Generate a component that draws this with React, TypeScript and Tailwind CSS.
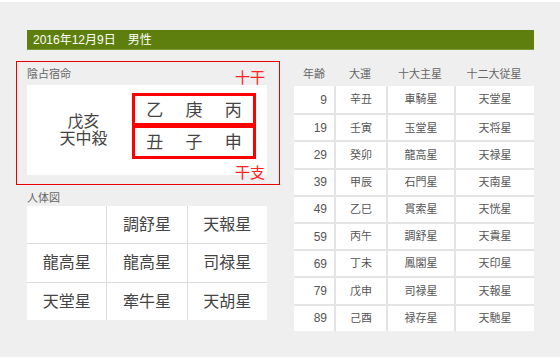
import React from "react";

const font = { fontFamily: '"Liberation Sans", "Noto Sans CJK JP", sans-serif' };

const stems = ["乙", "庚", "丙"];
const branches = ["丑", "子", "申"];

const body: string[][] = [
  ["", "調舒星", "天報星"],
  ["龍高星", "龍高星", "司禄星"],
  ["天堂星", "牽牛星", "天胡星"],
];

interface Luck {
  age: number;
  luck: string;
  main: string;
  sub: string;
}

const lucks: Luck[] = [
  { age: 9, luck: "辛丑", main: "車騎星", sub: "天堂星" },
  { age: 19, luck: "壬寅", main: "玉堂星", sub: "天将星" },
  { age: 29, luck: "癸卯", main: "龍高星", sub: "天禄星" },
  { age: 39, luck: "甲辰", main: "石門星", sub: "天南星" },
  { age: 49, luck: "乙巳", main: "貫索星", sub: "天恍星" },
  { age: 59, luck: "丙午", main: "調舒星", sub: "天貴星" },
  { age: 69, luck: "丁未", main: "鳳閣星", sub: "天印星" },
  { age: 79, luck: "戊申", main: "司禄星", sub: "天報星" },
  { age: 89, luck: "己酉", main: "禄存星", sub: "天馳星" },
];

const App: React.FC = () => {
  return (
    <div className="w-[560px] h-[359px] bg-white pt-[2px]" style={font}>
      <div className="h-[355px] bg-[#efefef] pl-[27px] pr-[26px] pt-[28px]">
        <div className="h-[20px] bg-[#5e7f0d] border-b border-[#7d9a3a] pl-[6px] flex items-center text-white text-[12px]">
          2016年12月9日　男性
        </div>

        <div className="flex mt-[11px]">
          {/* left column */}
          <div className="w-[240px]">
            <div className="relative -ml-[11px] w-[264px] border border-[#e60000] pl-[10px] pr-[12px] pb-[9px]">
              <div className="h-[23px] pt-[5px] text-[11px] leading-[14px] text-[#666]">陰占宿命</div>
              <span className="absolute left-[218px] top-[7px] text-[15px] leading-[17px] text-[#ff2020]">十干</span>
              <span className="absolute left-[218px] top-[102px] text-[15px] leading-[17px] text-[#ff2020]">干支</span>
              <div className="h-[90px] bg-white flex text-[#444]">
                <div className="flex-1 flex flex-col items-center justify-center pl-[8px] text-[16px] leading-[17px]">
                  <span>戊亥</span>
                  <span>天中殺</span>
                </div>
                <div className="w-[124px] mr-[11px] pt-[8px]">
                  <div className="h-[33px] border-[3px] border-[#ff0000] grid grid-cols-3 items-center text-center text-[17px] leading-[20px] pt-[3px]">
                    {stems.map((s) => (
                      <span key={s}>{s}</span>
                    ))}
                  </div>
                  <div className="h-[33px] border-[3px] border-t-2 border-[#ff0000] grid grid-cols-3 items-center text-center text-[17px] leading-[20px] pt-[2px]">
                    {branches.map((s) => (
                      <span key={s}>{s}</span>
                    ))}
                  </div>
                </div>
              </div>
            </div>

            <div className="h-[21px] pt-[6px] text-[11px] leading-[14px] text-[#666]">人体図</div>
            <div className="grid grid-cols-3 grid-rows-[37px_38px_37px] gap-px bg-[#dcdcdc] text-[16px] text-[#444]">
              {body.flat().map((c, i) => (
                <div key={i} className="bg-white flex items-center justify-center">
                  {c}
                </div>
              ))}
            </div>
          </div>

          {/* right column */}
          <div className="ml-[27px] w-[240px] text-[11px] text-[#555]">
            <div className="flex h-[25px] items-center pt-[1px] text-[#666]">
              <span className="w-[40px] text-center">年齢</span>
              <span className="w-[52px] text-center">大運</span>
              <span className="w-[68px] text-center">十大主星</span>
              <span className="w-[80px] text-center">十二大従星</span>
            </div>
            {lucks.map((r, i) => (
              <div
                key={r.age}
                className={`flex h-[27.2px] bg-white border-[#e4e4e4] ${i > 0 ? "border-t-2" : ""}`}
              >
                <span className="w-[40px] flex items-center justify-end pr-[7px] text-[12px]">{r.age}</span>
                <span className="w-[52px] border-l-2 border-[#e4e4e4] flex items-center justify-center">{r.luck}</span>
                <span className="w-[68px] border-l-2 border-[#e4e4e4] flex items-center justify-center">{r.main}</span>
                <span className="w-[80px] border-l-2 border-[#e4e4e4] flex items-center justify-center">{r.sub}</span>
              </div>
            ))}
          </div>
        </div>
      </div>
    </div>
  );
};

export default App;
